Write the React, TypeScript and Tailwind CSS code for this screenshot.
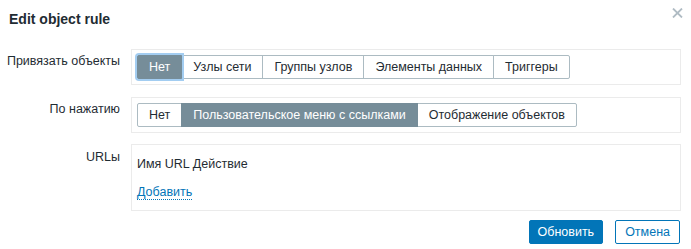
import React from "react";

type SegProps = { items: string[]; active: number; focused?: boolean };

function Segmented({ items, active, focused }: SegProps) {
  return (
    <div className="flex">
      {items.map((it, i) => {
        const isActive = i === active;
        const first = i === 0;
        const last = i === items.length - 1;
        return (
          <div
            key={it}
            className={[
              "h-[24px] px-[11px] border leading-[22px] text-[12.5px] whitespace-nowrap",
              first ? "rounded-l-[2px]" : "-ml-px",
              last ? "rounded-r-[2px]" : "",
              isActive
                ? "bg-[#768d99] border-[#768d99] text-white relative z-10"
                : "bg-white border-[#acbbc2] text-[#1f2c33]",
              isActive && focused ? "ring-2 ring-[#a3cdf1]" : "",
            ].join(" ")}
          >
            {it}
          </div>
        );
      })}
    </div>
  );
}

export default function App() {
  return (
    <div
      className="relative w-[691px] h-[249px] bg-white text-[#1f2c33] text-[12.5px] leading-[14px] overflow-hidden"
      style={{ fontFamily: '"Liberation Sans", Arial, sans-serif' }}
    >
      <div className="h-[49px] pt-[10px] pl-[9px]">
        <div className="text-[14px] leading-[18px] font-bold text-[#1f2c33]">
          Edit object rule
        </div>
      </div>
      <button className="absolute top-[8px] right-[8px] w-[11px] h-[10px]" aria-label="Close">
        <svg width="11" height="10" viewBox="0 0 11 10">
          <path d="M1 0.5 L10 9.5 M10 0.5 L1 9.5" stroke="#b0bcc4" strokeWidth="1.8" />
        </svg>
      </button>

      <div className="flex flex-col">
        <div className="flex">
          <div className="w-[120px] text-right pt-[5px] whitespace-nowrap">Привязать объекты</div>
          <div className="ml-[11px] w-[550px] h-[36px] border border-[#ebebeb] px-[5px] py-[5px]">
            <Segmented
              items={["Нет", "Узлы сети", "Группы узлов", "Элементы данных", "Триггеры"]}
              active={0}
              focused
            />
          </div>
        </div>

        <div className="flex mt-[12px]">
          <div className="w-[120px] text-right pt-[5px]">По нажатию</div>
          <div className="ml-[11px] w-[550px] h-[36px] border border-[#ebebeb] px-[5px] py-[5px]">
            <Segmented
              items={["Нет", "Пользовательское меню с ссылками", "Отображение объектов"]}
              active={1}
            />
          </div>
        </div>

        <div className="flex mt-[11px]">
          <div className="w-[120px] text-right pt-[6px]">URLы</div>
          <div className="ml-[11px] w-[550px] border border-[#ebebeb] pl-[5px] pt-[12px] pb-[11px]">
            <div className="leading-[14px]">Имя URL Действие</div>
            <div className="mt-[14px] leading-[14px]">
              <span className="text-[#0275b8] border-b border-dotted border-[#0275b8]">
                Добавить
              </span>
            </div>
          </div>
        </div>

        <div className="flex mt-[9px]">
          <div className="w-[120px]" />
          <div className="ml-[11px] w-[549px] flex justify-end gap-[12px]">
            <button className="h-[24px] px-[8px] rounded-[2px] bg-[#0275b8] border border-[#0275b8] text-white text-[12.5px] leading-[22px]">
              Обновить
            </button>
            <button className="h-[24px] px-[9px] rounded-[2px] bg-white border border-[#0275b8] text-[#0275b8] text-[12.5px] leading-[22px]">
              Отмена
            </button>
          </div>
        </div>
      </div>
    </div>
  );
}
